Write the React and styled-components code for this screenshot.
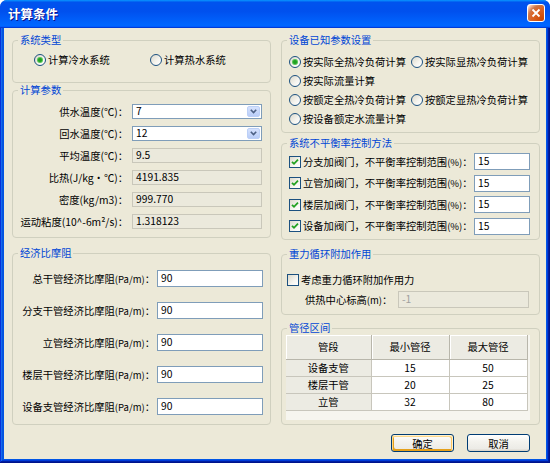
import React from 'react';
import styled, { createGlobalStyle, css } from 'styled-components';

const Global = createGlobalStyle`
  html, body { margin: 0; padding: 0; background: #fff; }
  body { font-family: "Noto Sans CJK SC", "Liberation Sans", sans-serif; }
  * { box-sizing: border-box; }
`;

const FONT = '10.3px';

const Window = styled.div`
  width: 550px;
  height: 463px;
  display: flex;
  flex-direction: column;
  border-radius: 7px 7px 0 0;
  overflow: hidden;
  background: #0055e5;
`;

const TitleBar = styled.div`
  height: 28px;
  flex: none;
  display: flex;
  align-items: center;
  justify-content: space-between;
  padding: 0 5px 0 8px;
  background: linear-gradient(
    180deg,
    #0997ff 0%,
    #0053ee 8%,
    #0050ee 40%,
    #0066ff 88%,
    #0066ff 93%,
    #005bff 95%,
    #003dd7 96%,
    #003dd7 100%
  );
`;

const Title = styled.span`
  color: #fff;
  font-weight: bold;
  font-size: 12.5px;
  text-shadow: 1px 1px #0f1089;
  margin-top: -1px;
`;

const CloseButton = styled.div`
  width: 18px;
  height: 18px;
  border: 1px solid #fff;
  border-radius: 3px;
  display: flex;
  align-items: center;
  justify-content: center;
  background: radial-gradient(
    circle at 90% 90%,
    #cc4600 0,
    #dc6527 55%,
    #cd7546 70%,
    #ffccb2 90%,
    #fff 100%
  );
  margin-top: -2px;
`;

const Frame = styled.div`
  flex: 1;
  display: flex;
  padding: 0 4px 4px;
  background: #0055e5;
  box-shadow: inset -1px -1px #00138c, inset 1px 0 #0831d9, inset -2px -2px #001ea0,
    inset 2px 0 #166aee, inset -3px -3px #003bda, inset 3px 0 #0855dd;
`;

const Body = styled.div`
  flex: 1;
  background: #ece9d8;
  padding: 5px 6px 0 8px;
  display: flex;
  flex-direction: column;
  font-size: ${FONT};
  color: #000;
`;

const Columns = styled.div`
  display: grid;
  grid-template-columns: 259px 259px;
  column-gap: 10px;
`;

const Column = styled.div`
  display: flex;
  flex-direction: column;
`;

const Group = styled.fieldset`
  margin: ${(p) => p.$mt || 0}px 0 0;
  height: ${(p) => p.$h}px;
  border: 1px solid #d0d0bf;
  border-radius: 4px;
  padding: 0;
  min-width: 0;
`;

const Legend = styled.legend`
  color: #0046d5;
  font-size: ${FONT};
  line-height: 14px;
  padding: 0 2px;
  margin-left: 5px;
`;

const GroupBody = styled.div`
  padding: ${(p) => p.$pad};
`;

/* ---------- radio / checkbox ---------- */
const RadioCircle = styled.span`
  width: 12px;
  height: 12px;
  flex: none;
  border-radius: 50%;
  border: 1px solid #1c5180;
  background: linear-gradient(135deg, #dcd9cb 0%, #f6f5f0 60%, #fff 100%);
  display: inline-flex;
  align-items: center;
  justify-content: center;
  &::after {
    content: '';
    display: ${(p) => (p.$on ? 'block' : 'none')};
    width: 4px;
    height: 4px;
    border-radius: 50%;
    background: #21a121;
    box-shadow: 0 0 0 1px #55c455;
  }
`;

const Option = styled.label`
  display: flex;
  align-items: center;
  gap: 2px;
  height: 14px;
  line-height: 14px;
  white-space: nowrap;
  ${(p) => p.$w && css`width: ${p.$w}px;`}
`;

const CheckBox = styled.span`
  width: 12px;
  height: 12px;
  flex: none;
  border: 1px solid #1c5180;
  background: linear-gradient(135deg, #dcd9cb 0%, #f6f5f0 60%, #fff 100%);
  display: inline-flex;
  align-items: center;
  justify-content: center;
`;

const Radio = ({ on, children, w }) => (
  <Option $w={w}>
    <RadioCircle $on={on} />
    <span>{children}</span>
  </Option>
);

const Check = ({ on, children }) => (
  <Option>
    <CheckBox>
      {on && (
        <svg width="8" height="8" viewBox="0 0 8 8">
          <path d="M1 3.8 L3 5.8 L7 1.6" stroke="#21a121" strokeWidth="1.8" fill="none" />
        </svg>
      )}
    </CheckBox>
    <span>{children}</span>
  </Option>
);

/* ---------- layout rows ---------- */
const RadioRow = styled.div`
  display: flex;
  align-items: center;
`;

const RadioGrid = styled.div`
  display: grid;
  grid-template-columns: 122px auto;
  row-gap: 5.3px;
`;

const FormGrid = styled.div`
  display: grid;
  grid-template-columns: ${(p) => p.$cols};
  column-gap: ${(p) => p.$cg}px;
  row-gap: ${(p) => p.$rg}px;
  grid-auto-rows: ${(p) => p.$rh}px;
  align-items: center;
`;

const Label = styled.span`
  text-align: ${(p) => (p.$left ? 'left' : 'right')};
  white-space: nowrap;
  line-height: 14px;
  ${(p) => p.$w && css`width: ${p.$w}px; flex: none;`}
`;

const Small = styled.span`
  font-size: 9.5px;
`;

const Field = styled.div`
  position: relative;
  height: ${(p) => p.$h || 15}px;
  width: ${(p) => (p.$w ? `${p.$w}px` : 'auto')};
  flex: none;
  border: 1px solid ${(p) => (p.$variant === 'white' ? '#7f9db9' : '#c9c7ba')};
  background: ${(p) => (p.$variant === 'white' ? '#fff' : '#ebe9dc')};
  color: ${(p) => (p.$variant === 'disabled' ? '#a0a0a0' : '#000')};
  padding-left: 3px;
  font-size: ${FONT};
  line-height: ${(p) => (p.$h || 15) - 3}px;
  white-space: nowrap;
`;

const ComboButton = styled.span`
  position: absolute;
  right: 1px;
  top: 1px;
  bottom: 1px;
  width: 13px;
  border-radius: 2px;
  background: linear-gradient(180deg, #d6e2fd 0%, #b9cdf8 100%);
  border: 1px solid #bcd0f7;
  display: flex;
  align-items: center;
  justify-content: center;
`;

const Combo = ({ value }) => (
  <Field $variant="white" $h={15}>
    {value}
    <ComboButton>
      <svg width="7" height="5" viewBox="0 0 7 5">
        <path d="M0.8 0.8 L3.5 3.6 L6.2 0.8" stroke="#4d6185" strokeWidth="1.6" fill="none" />
      </svg>
    </ComboButton>
  </Field>
);

const CheckRows = styled.div`
  display: flex;
  flex-direction: column;
  gap: 4.5px;
`;

const CheckRow = styled.div`
  height: 17px;
  display: flex;
  align-items: center;
  justify-content: space-between;
`;

const Stack = styled.div`
  display: flex;
  flex-direction: column;
  gap: ${(p) => p.$gap}px;
`;

const InlineRow = styled.div`
  display: flex;
  align-items: center;
  padding-left: ${(p) => p.$pl || 0}px;
`;

/* ---------- grid table ---------- */
const GridPanel = styled.div`
  width: 244px;
  height: 85px;
  background: #f6f5ef;
`;

const Table = styled.table`
  border-collapse: collapse;
  width: 241px;
  table-layout: fixed;
  font-size: ${FONT};
`;

const Col = styled.col`
  width: ${(p) => p.$w}px;
`;

const Th = styled.th`
  height: 24px;
  font-weight: normal;
  background: #ecebe3;
  border-right: 1px solid #b8b6ab;
  border-bottom: 1px solid #b8b6ab;
  box-shadow: inset 1px 1px #fff;
  text-align: center;
  padding: 0;
`;

const Td = styled.td`
  height: 17px;
  padding: 0;
  text-align: center;
  background: ${(p) => (p.$head ? '#ecebe3' : '#fff')};
  border-right: 1px solid #c8c6bc;
  border-bottom: 1px solid #c8c6bc;
  line-height: 15px;
`;

/* ---------- buttons ---------- */
const ButtonBar = styled.div`
  display: flex;
  justify-content: flex-end;
  gap: 13px;
  padding-right: 10px;
  margin-top: 9px;
`;

const Button = styled.button`
  width: 63px;
  height: 18px;
  padding: 0;
  border: 1px solid #003c74;
  border-radius: 3px;
  font-family: inherit;
  font-size: ${FONT};
  color: #000;
  background: linear-gradient(180deg, #fff 0%, #f4f3ee 40%, #ecebe6 86%, #d6d0c5 100%);
  ${(p) =>
    p.$default &&
    css`
      box-shadow: inset -1px 1px #fff0cf, inset 1px 2px #fdd889, inset -2px 2px #fbc761,
        inset 2px -2px #e5a01a;
    `}
`;

const pipes = [
  ['设备支管', '15', '50'],
  ['楼层干管', '20', '25'],
  ['立管', '32', '80'],
];

const params = [
  ['平均温度(℃)：', '9.5'],
  ['比热(J/kg•℃)：', '4191.835'],
  ['密度(kg/m3)：', '999.770'],
  ['运动粘度(10^-6m²/s)：', '1.318123'],
];

const friction = ['总干管', '分支干管', '立管', '楼层干管', '设备支管'];

export default function App() {
  return (
    <>
      <Global />
      <Window>
        <TitleBar>
          <Title>计算条件</Title>
          <CloseButton>
            <svg width="10" height="10" viewBox="0 0 10 10">
              <path d="M1.5 1.5 L8.5 8.5 M8.5 1.5 L1.5 8.5" stroke="#fff" strokeWidth="1.8" />
            </svg>
          </CloseButton>
        </TitleBar>
        <Frame>
          <Body>
            <Columns>
              <Column>
                <Group $h={50}>
                  <Legend>系统类型</Legend>
                  <GroupBody $pad="6px 0 0 21px">
                    <RadioRow>
                      <Radio on w={116}>计算冷水系统</Radio>
                      <Radio>计算热水系统</Radio>
                    </RadioRow>
                  </GroupBody>
                </Group>

                <Group $h={155}>
                  <Legend>计算参数</Legend>
                  <GroupBody $pad="7px 0 0 0">
                    <FormGrid $cols="115px 130px" $cg={4} $rg={7} $rh={15}>
                      <Label>供水温度(℃)：</Label>
                      <Combo value="7" />
                      <Label>回水温度(℃)：</Label>
                      <Combo value="12" />
                      {params.map(([l, v]) => (
                        <React.Fragment key={l}>
                          <Label>{l}</Label>
                          <Field $variant="readonly">{v}</Field>
                        </React.Fragment>
                      ))}
                    </FormGrid>
                  </GroupBody>
                </Group>

                <Group $mt={8} $h={179}>
                  <Legend>经济比摩阻</Legend>
                  <GroupBody $pad="10px 0 0 0">
                    <FormGrid $cols="142px 106px" $cg={2} $rg={15} $rh={17}>
                      {friction.map((k) => (
                        <React.Fragment key={k}>
                          <Label>
                            {k}经济比摩阻<Small>(Pa/m)</Small>：
                          </Label>
                          <Field $variant="white" $h={17}>90</Field>
                        </React.Fragment>
                      ))}
                    </FormGrid>
                  </GroupBody>
                </Group>
              </Column>

              <Column>
                <Group $h={100}>
                  <Legend>设备已知参数设置</Legend>
                  <GroupBody $pad="7.5px 0 0 7px">
                    <RadioGrid>
                      <Radio on>按实际全热冷负荷计算</Radio>
                      <Radio>按实际显热冷负荷计算</Radio>
                      <Radio>按实际流量计算</Radio>
                      <span />
                      <Radio>按额定全热冷负荷计算</Radio>
                      <Radio>按额定显热冷负荷计算</Radio>
                      <Radio>按设备额定水流量计算</Radio>
                      <span />
                    </RadioGrid>
                  </GroupBody>
                </Group>

                <Group $mt={3} $h={104}>
                  <Legend>系统不平衡率控制方法</Legend>
                  <GroupBody $pad="3px 9px 0 7px">
                    <CheckRows>
                      {['分支', '立管', '楼层', '设备'].map((k) => (
                        <CheckRow key={k}>
                          <Check on>
                            {k}加阀门，不平衡率控制范围<Small>(%)</Small>：
                          </Check>
                          <Field $variant="white" $h={17} $w={56}>15</Field>
                        </CheckRow>
                      ))}
                    </CheckRows>
                  </GroupBody>
                </Group>

                <Group $mt={7} $h={68}>
                  <Legend>重力循环附加作用</Legend>
                  <GroupBody $pad="12px 10px 0 5px">
                    <Stack $gap={4}>
                      <Check>考虑重力循环附加作用力</Check>
                      <InlineRow $pl={18}>
                        <Label $left $w={93}>
                          供热中心标高<Small>(m)</Small>：
                        </Label>
                        <Field $variant="disabled" $h={17} $w={131}>-1</Field>
                      </InlineRow>
                    </Stack>
                  </GroupBody>
                </Group>

                <Group $mt={6} $h={104}>
                  <Legend>管径区间</Legend>
                  <GroupBody $pad="0 0 0 4px">
                    <GridPanel>
                      <Table>
                        <colgroup>
                          <Col $w={85} />
                          <Col $w={78} />
                          <Col $w={78} />
                        </colgroup>
                        <thead>
                          <tr>
                            <Th>管段</Th>
                            <Th>最小管径</Th>
                            <Th>最大管径</Th>
                          </tr>
                        </thead>
                        <tbody>
                          {pipes.map(([n, a, b]) => (
                            <tr key={n}>
                              <Td $head>{n}</Td>
                              <Td>{a}</Td>
                              <Td>{b}</Td>
                            </tr>
                          ))}
                        </tbody>
                      </Table>
                    </GridPanel>
                  </GroupBody>
                </Group>
              </Column>
            </Columns>

            <ButtonBar>
              <Button $default>确定</Button>
              <Button>取消</Button>
            </ButtonBar>
          </Body>
        </Frame>
      </Window>
    </>
  );
}
